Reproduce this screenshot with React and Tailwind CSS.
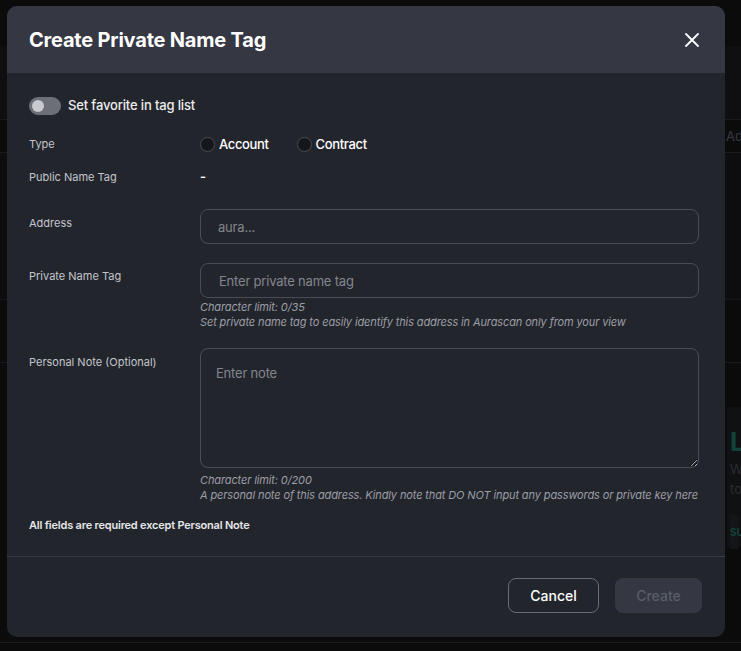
import React, { useState } from "react";

function Toggle({ on, onChange }) {
    return (
        <button
            onClick={() => onChange(!on)}
            className="relative w-[32px] h-[18px] rounded-full bg-[#6d6f78] shrink-0"
        >
            <span className={"absolute top-[3px] w-[12px] h-[12px] rounded-full bg-[#c9cacf] " + (on ? "left-[17px]" : "left-[3px]")} />
        </button>
    );
}

function Radio({ label, checked, onClick }) {
    return (
        <label onClick={onClick} className="flex items-center gap-[4px] cursor-pointer">
            <span className="w-[15px] h-[15px] rounded-full bg-[#15161b] border border-[#4b4d56] flex items-center justify-center">
                {checked && <span className="w-[7px] h-[7px] rounded-full bg-white" />}
            </span>
            <span className="text-[13px] font-medium text-white leading-[20px] tracking-[-0.35px]">{label}</span>
        </label>
    );
}

export default function App() {
    const [fav, setFav] = useState(false);
    const [type, setType] = useState("");
    const [tag, setTag] = useState("");
    const [note, setNote] = useState("");

    return (
        <div className="relative w-[741px] h-[651px] overflow-hidden bg-[#0b0b0c]" style={{ fontFamily: "Inter, 'Noto Sans', sans-serif" }}>
            {/* page behind the modal */}
            <div className="flex flex-col h-full text-[#2c2d31]">
                <div className="h-[46px]" />
                <div className="h-[74px] bg-[#0f0f11] border-b border-[#1a1b1e]" />
                <div className="h-[33px] border-b border-[#1a1b1e] pl-[726px] text-[13px] leading-[33px] text-[#3a3b40]">Ad</div>
                <div className="h-[146px] bg-[#0d0d0f]" />
                <div className="h-[64px] border-t border-b border-[#17181b]" />
                <div className="mt-[44px] ml-[727px] h-[140px] bg-[#101113] pt-[20px] px-[3px]">
                    <div className="text-[26px] font-bold leading-[30px] text-[#134338]">L</div>
                    <div className="mt-[2px] text-[13px] leading-[20px] text-[#2a2b2f]">W</div>
                    <div className="text-[13px] leading-[20px] text-[#2a2b2f]">to</div>
                    <div className="mt-[16px] h-[34px] bg-[#141518] text-[10px] font-bold leading-[34px] text-[#134338]">SU</div>
                </div>
                <div className="mt-auto h-[9px] border-t border-[#1a1b1e]" />
            </div>

            {/* overlay + modal */}
            <div className="absolute inset-0 pl-[7px] pt-[6px]">
                <div className="w-[718px] h-[631px] rounded-[10px] overflow-hidden bg-[#23252d] flex flex-col">
                    <div className="h-[67px] bg-[#353743] flex items-center justify-between pl-[22px] pr-[25px] shrink-0">
                        <h2 className="text-[20px] font-bold text-white tracking-[-0.2px]">Create Private Name Tag</h2>
                        <svg width="16" height="16" viewBox="0 0 16 16" fill="none" stroke="white" strokeWidth="1.8" strokeLinecap="round">
                            <path d="M2 2L14 14M14 2L2 14" />
                        </svg>
                    </div>

                    <div className="pl-[22px] pr-[26px] pt-[24px] pb-[23px]">
                        <div className="flex items-center gap-[7px] h-[18px]">
                            <Toggle on={fav} onChange={setFav} />
                            <span className="text-[13px] font-medium text-[#ececee] tracking-[-0.15px]">Set favorite in tag list</span>
                        </div>

                        <div className="flex items-center h-[20px] mt-[19px]">
                            <div className="w-[171px] text-[11px] text-[#c3c5cb]">Type</div>
                            <div className="flex items-center gap-[28px]">
                                <Radio label="Account" checked={type === "account"} onClick={() => setType("account")} />
                                <Radio label="Contract" checked={type === "contract"} onClick={() => setType("contract")} />
                            </div>
                        </div>

                        <div className="flex items-center h-[20px] mt-[13px]">
                            <div className="w-[171px] text-[11px] text-[#c3c5cb]">Public Name Tag</div>
                            <div className="text-[13px] font-semibold text-white">-</div>
                        </div>

                        <div className="flex mt-[22px]">
                            <div className="w-[171px] pt-[7px] text-[11px] leading-[14px] text-[#c3c5cb]">Address</div>
                            <input
                                placeholder="aura..."
                                className="flex-1 h-[35px] rounded-[8px] border border-[#4a4c55] bg-transparent pl-[17px] text-[13px] tracking-[-0.2px] text-white placeholder:text-[#83858d] outline-none"
                            />
                        </div>

                        <div className="flex mt-[19px]">
                            <div className="w-[171px] pt-[6px] text-[11px] leading-[14px] text-[#c3c5cb]">Private Name Tag</div>
                            <div className="flex-1">
                                <input
                                    value={tag}
                                    onChange={(e) => setTag(e.target.value.slice(0, 35))}
                                    placeholder="Enter private name tag"
                                    className="w-full h-[35px] rounded-[8px] border border-[#4a4c55] bg-transparent pl-[18px] text-[13px] tracking-[-0.2px] text-white placeholder:text-[#83858d] outline-none"
                                />
                                <div className="mt-[2px] text-[11px] italic leading-[15px] tracking-[-0.12px] text-[#9c9ea5] whitespace-nowrap">
                                    <p>Character limit: {tag.length}/35</p>
                                    <p>Set private name tag to easily identify this address in Aurascan only from your view</p>
                                </div>
                            </div>
                        </div>

                        <div className="flex mt-[18px]">
                            <div className="w-[171px] pt-[7px] text-[11px] leading-[14px] text-[#c3c5cb]">Personal Note (Optional)</div>
                            <div className="flex-1">
                                <textarea
                                    value={note}
                                    onChange={(e) => setNote(e.target.value.slice(0, 200))}
                                    placeholder="Enter note"
                                    className="block w-full h-[120px] rounded-[8px] border border-[#4a4c55] bg-transparent px-[15px] pt-[15px] text-[13px] tracking-[-0.2px] text-white placeholder:text-[#83858d] outline-none"
                                />
                                <div className="mt-[5px] text-[11px] italic leading-[15px] tracking-[-0.12px] text-[#9c9ea5] whitespace-nowrap">
                                    <p>Character limit: {note.length}/200</p>
                                    <p>A personal note of this address. Kindly note that DO NOT input any passwords or private key here</p>
                                </div>
                            </div>
                        </div>

                        <p className="mt-[15px] text-[11px] font-semibold leading-[15px] tracking-[-0.2px] text-[#e6e7ea]">All fields are required except Personal Note</p>
                    </div>

                    <div className="border-t border-[#393b44] flex justify-end gap-[16px] pt-[21px] pr-[23px]">
                        <button className="w-[91px] h-[35px] rounded-[8px] border border-[#6b6d75] text-[14px] font-medium text-white">Cancel</button>
                        <button disabled className="w-[87px] h-[35px] rounded-[8px] bg-[#353743] text-[14px] font-medium text-[#5b5d67]">Create</button>
                    </div>
                </div>
            </div>
        </div>
    );
}
